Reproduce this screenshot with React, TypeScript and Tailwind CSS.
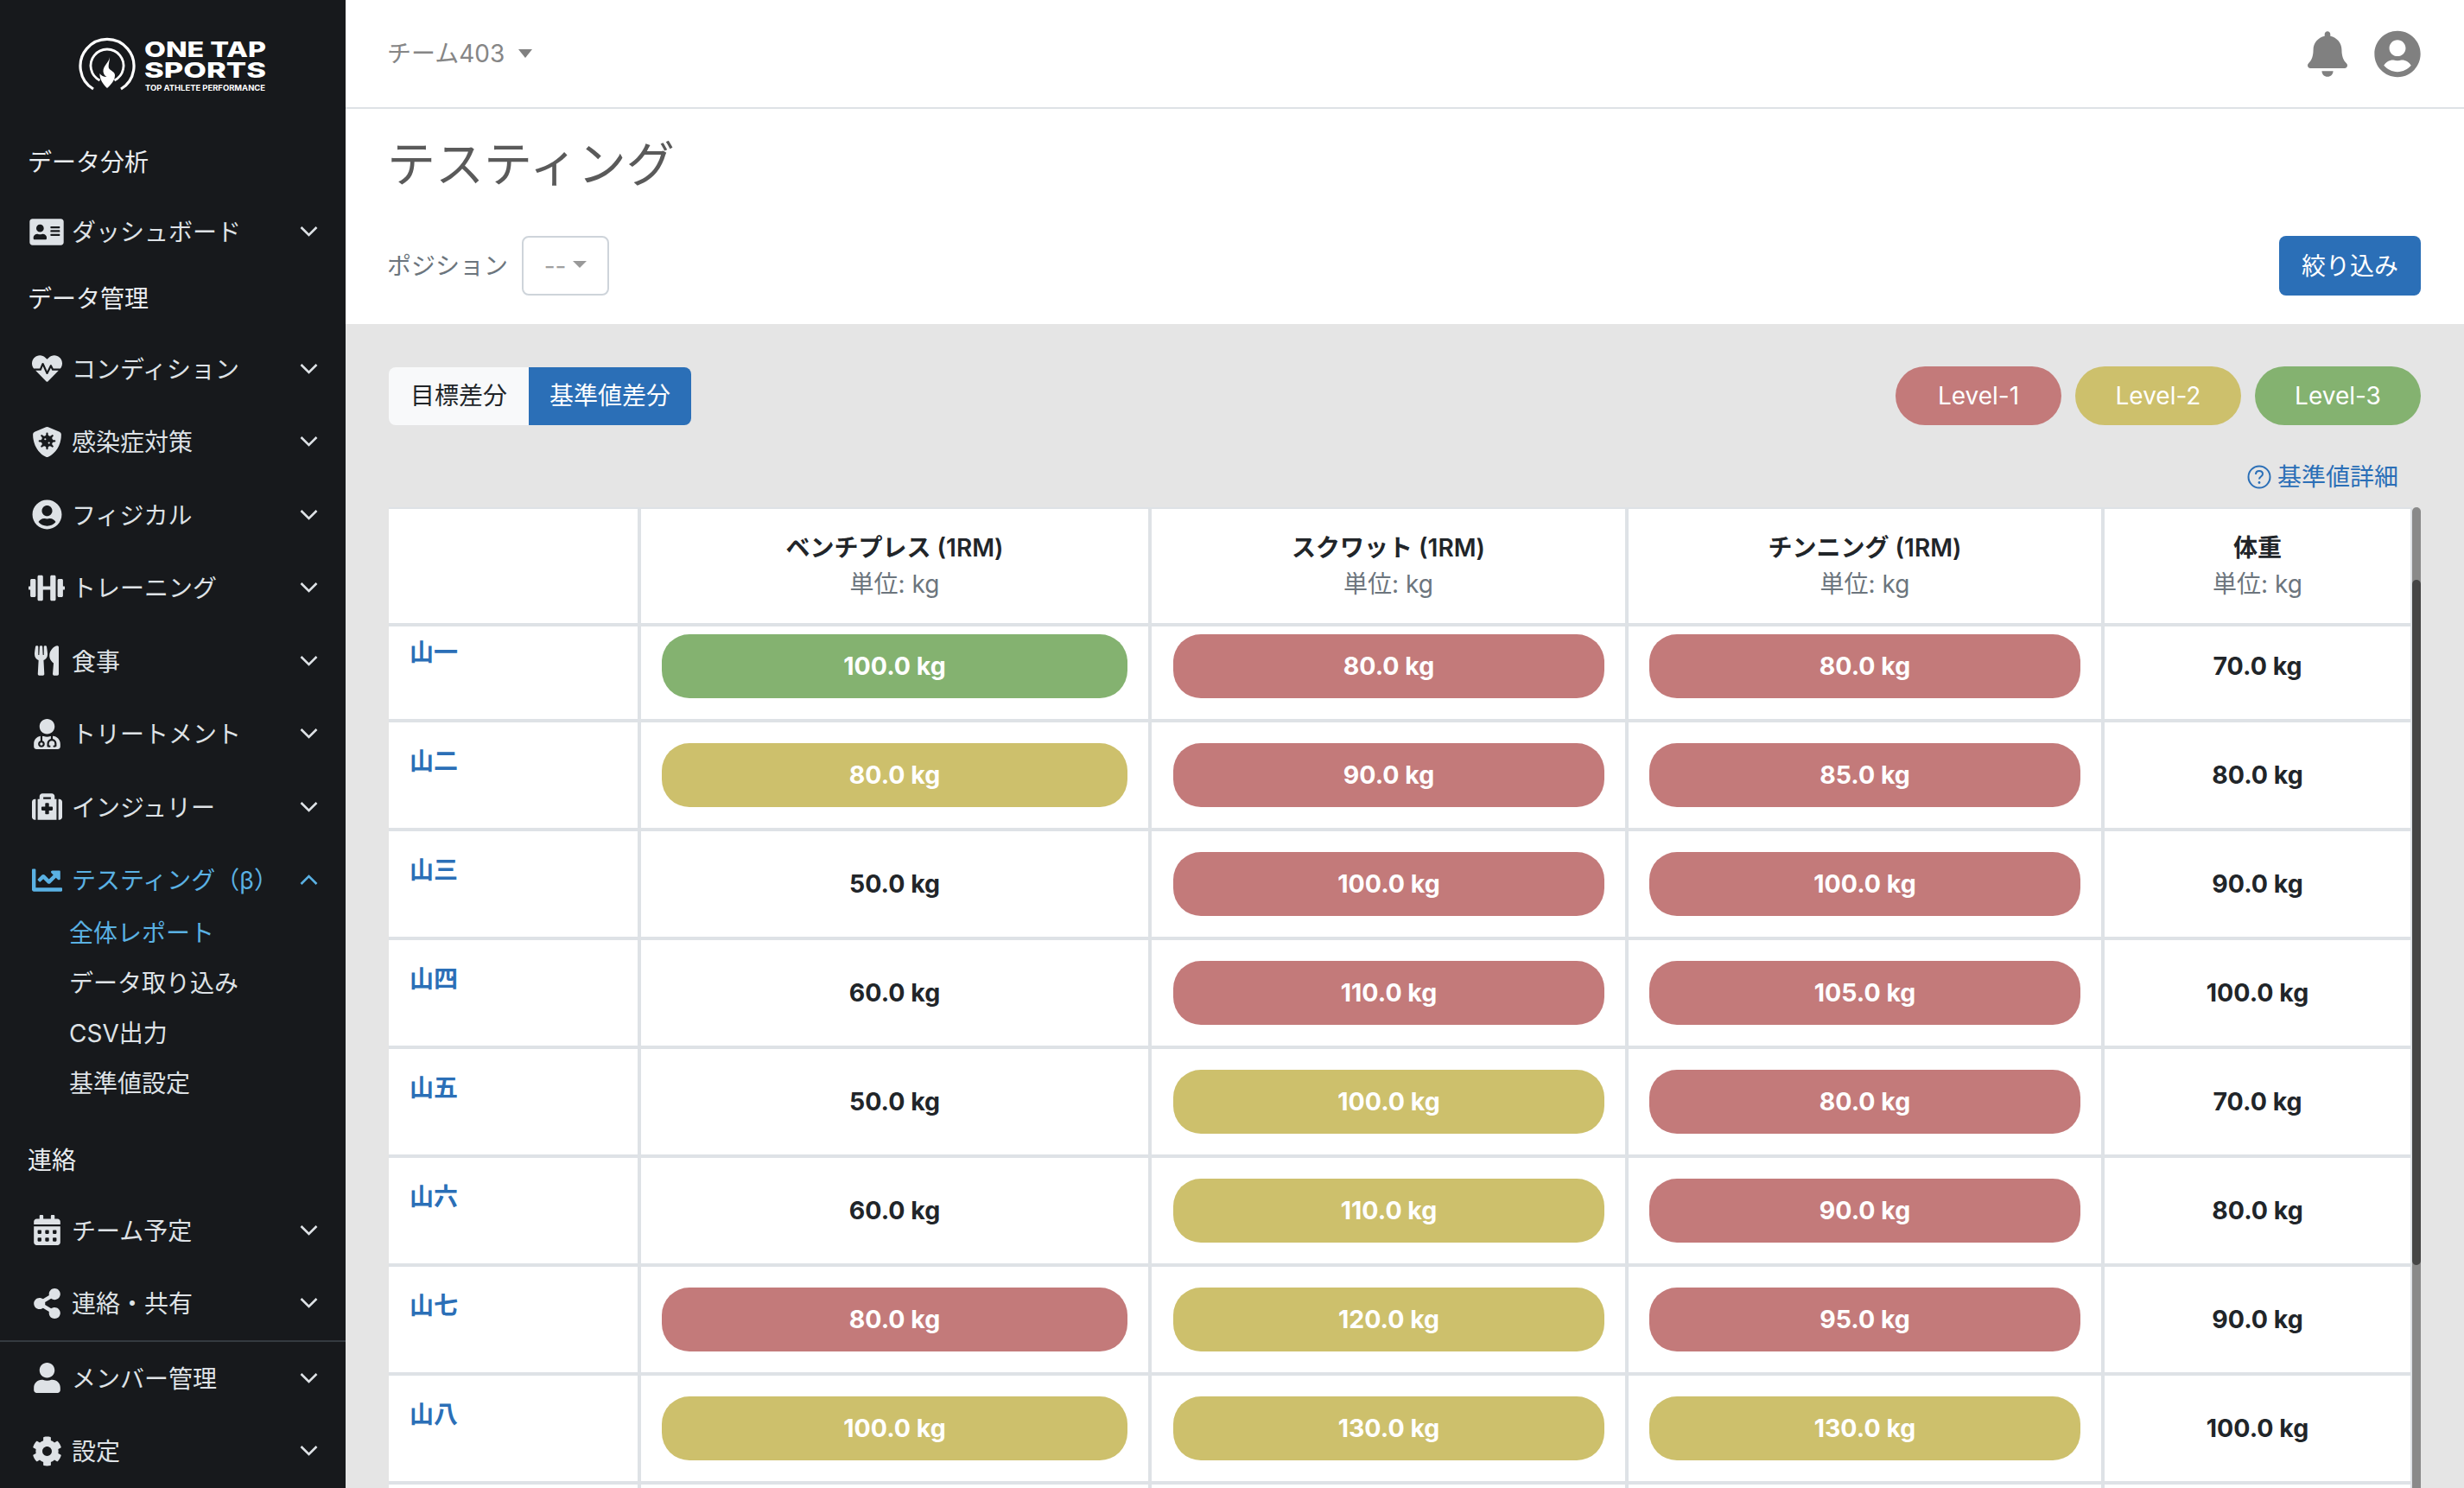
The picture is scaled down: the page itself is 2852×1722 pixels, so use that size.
import React from "react";
import {
  FaAddressCard, FaHeartbeat, FaShieldVirus, FaUserCircle, FaDumbbell, FaUtensils, FaUserMd,
  FaMedkit, FaChartLine, FaCalendarAlt, FaShareAlt, FaUser, FaCog, FaBell,
} from "react-icons/fa";

function Chevron({ up }: { up?: boolean }) {
  return (
    <svg viewBox="0 0 22 14" className="w-[23px] h-[14px] shrink-0">
      <path d={up ? "M2 12 L11 3 L20 12" : "M2 2 L11 11 L20 2"} fill="none" stroke="currentColor" strokeWidth="2.6" />
    </svg>
  );
}

function Logo() {
  const f = "Inter, sans-serif";
  return (
    <svg viewBox="0 0 230 72" className="w-[230px] h-[72px]">
      <path d="M18 63 A31 31 0 1 1 50 63" fill="none" stroke="#fff" strokeWidth="3.2" />
      <path d="M25.5 53 A19 19 0 1 1 42.5 53" fill="none" stroke="#fff" strokeWidth="2.8" />
      <path d="M37 26 C36.5 32 29 36 29.5 43 C30 46 31.5 48 33.5 49 C30 49 27 47.5 25.5 45 C25 52 30 58 34 62 C38.5 58 43 53 43 47 C43 43 38 42 36 39 C35 35 37 31 37 26 Z" fill="#fff" />
      <text x="77" y="26" textLength="141" lengthAdjust="spacingAndGlyphs" fontFamily={f} fontWeight="800" fontSize="25" fill="#fff">ONE TAP</text>
      <text x="77" y="50" textLength="141" lengthAdjust="spacingAndGlyphs" fontFamily={f} fontWeight="800" fontSize="25" fill="#fff">SPORTS</text>
      <text x="78" y="64.5" textLength="139" lengthAdjust="spacingAndGlyphs" fontFamily={f} fontWeight="700" fontSize="9" fill="#fff">TOP ATHLETE PERFORMANCE</text>
    </svg>
  );
}

function NavItem({ icon, label, active, up }: { icon: React.ReactNode; label: string; active?: boolean; up?: boolean }) {
  return (
    <div className={`h-[84.5px] shrink-0 flex items-center pl-[33px] pr-[31px] text-[28px] ${active ? "text-[#5ab1e3]" : "text-[#dee2e6]"}`}>
      <span className="w-[42px] flex justify-center shrink-0">{icon}</span>
      <span className="ml-[8px] pt-[2px] flex-1 whitespace-nowrap">{label}</span>
      <Chevron up={up} />
    </div>
  );
}

function Heading({ label, className }: { label: string; className: string }) {
  return <div className={`pl-[32px] pt-[2px] flex items-center text-[28px] text-[#e9ecef] shrink-0 ${className}`}>{label}</div>;
}

function Sidebar() {
  return (
    <aside className="w-[400px] h-full shrink-0 bg-[#17191c] flex flex-col overflow-hidden">
      <div className="h-[148px] shrink-0 pl-[90px] pt-[40px]">
        <Logo />
      </div>
      <Heading label="データ分析" className="h-[78px]" />
      <NavItem icon={<FaAddressCard className="w-[40px] h-[35px]" />} label="ダッシュボード" />
      <Heading label="データ管理" className="h-[68px]" />
      <div className="h-[6px] shrink-0" />
      <NavItem icon={<FaHeartbeat className="w-[35px] h-[35px]" />} label="コンディション" />
      <NavItem icon={<FaShieldVirus className="w-[35px] h-[35px]" />} label="感染症対策" />
      <NavItem icon={<FaUserCircle className="w-[35px] h-[35px]" />} label="フィジカル" />
      <NavItem icon={<FaDumbbell className="w-[44px] h-[35px]" />} label="トレーニング" />
      <NavItem icon={<FaUtensils className="w-[28px] h-[35px]" />} label="食事" />
      <NavItem icon={<FaUserMd className="w-[31px] h-[35px]" />} label="トリートメント" />
      <NavItem icon={<FaMedkit className="w-[35px] h-[35px]" />} label="インジュリー" />
      <NavItem icon={<FaChartLine className="w-[35px] h-[35px]" />} label="テスティング（β）" active up />
      <div className="mt-[1px] flex flex-col gap-[22px] pl-[80px] text-[28px] text-[#dee2e6] shrink-0">
        <div className="h-[36px] leading-[36px] text-[#5ab1e3]">全体レポート</div>
        <div className="h-[36px] leading-[36px]">データ取り込み</div>
        <div className="h-[36px] leading-[36px]">CSV出力</div>
        <div className="h-[36px] leading-[36px]">基準値設定</div>
      </div>
      <Heading label="連絡" className="h-[66px] mt-[37px]" />
      <div className="h-[7px] shrink-0" />
      <NavItem icon={<FaCalendarAlt className="w-[31px] h-[35px]" />} label="チーム予定" />
      <NavItem icon={<FaShareAlt className="w-[31px] h-[35px]" />} label="連絡・共有" />
      <div className="border-t-2 border-[#343a40] shrink-0" />
      <NavItem icon={<FaUser className="w-[31px] h-[35px]" />} label="メンバー管理" />
      <NavItem icon={<FaCog className="w-[35px] h-[35px]" />} label="設定" />
    </aside>
  );
}

type Cell = { v: string; c?: "r" | "y" | "g" };
const rows: { name: string; cells: Cell[] }[] = [
  { name: "山一", cells: [{ v: "100.0 kg", c: "g" }, { v: "80.0 kg", c: "r" }, { v: "80.0 kg", c: "r" }, { v: "70.0 kg" }] },
  { name: "山二", cells: [{ v: "80.0 kg", c: "y" }, { v: "90.0 kg", c: "r" }, { v: "85.0 kg", c: "r" }, { v: "80.0 kg" }] },
  { name: "山三", cells: [{ v: "50.0 kg" }, { v: "100.0 kg", c: "r" }, { v: "100.0 kg", c: "r" }, { v: "90.0 kg" }] },
  { name: "山四", cells: [{ v: "60.0 kg" }, { v: "110.0 kg", c: "r" }, { v: "105.0 kg", c: "r" }, { v: "100.0 kg" }] },
  { name: "山五", cells: [{ v: "50.0 kg" }, { v: "100.0 kg", c: "y" }, { v: "80.0 kg", c: "r" }, { v: "70.0 kg" }] },
  { name: "山六", cells: [{ v: "60.0 kg" }, { v: "110.0 kg", c: "y" }, { v: "90.0 kg", c: "r" }, { v: "80.0 kg" }] },
  { name: "山七", cells: [{ v: "80.0 kg", c: "r" }, { v: "120.0 kg", c: "y" }, { v: "95.0 kg", c: "r" }, { v: "90.0 kg" }] },
  { name: "山八", cells: [{ v: "100.0 kg", c: "y" }, { v: "130.0 kg", c: "y" }, { v: "130.0 kg", c: "y" }, { v: "100.0 kg" }] },
  { name: "", cells: [{ v: "" }, { v: "" }, { v: "" }, { v: "" }] },
];

const widths = ["w-[292px]", "w-[591px]", "w-[552px]", "w-[551px]", "flex-1"];
const pillBg: Record<string, string> = { r: "bg-[#c37a7a]", y: "bg-[#cdc06c]", g: "bg-[#84b270]" };

function HeaderCell({ i, title }: { i: number; title?: string }) {
  return (
    <div className={`${widths[i]} shrink-0 ${i < 4 ? "border-r-4" : ""} border-[#dee2e6] pt-[24px] text-center text-[28px] leading-[42px]`}>
      {title && <div className="font-semibold text-[#212529]">{title}</div>}
      {title && <div className="text-[#6c757d]">単位: kg</div>}
    </div>
  );
}

function Table() {
  return (
    <div className="flex flex-1 min-h-0 overflow-hidden">
      <div className="flex-1 bg-white border-t-2 border-r-2 border-[#dee2e6] flex flex-col">
        <div className="flex h-[136px] shrink-0 border-b-4 border-[#dee2e6]">
          <HeaderCell i={0} />
          <HeaderCell i={1} title="ベンチプレス (1RM)" />
          <HeaderCell i={2} title="スクワット (1RM)" />
          <HeaderCell i={3} title="チンニング (1RM)" />
          <HeaderCell i={4} title="体重" />
        </div>
        {rows.map((r, ri) => (
          <div key={ri} className="flex shrink-0 border-b-4 border-[#dee2e6]">
            <div className={`${widths[0]} shrink-0 border-r-4 border-[#dee2e6] pl-[24px] pb-[24px] ${ri === 0 ? "pt-[9px]" : "pt-[24px]"}`}>
              <div className="h-[42px] leading-[42px] text-[28px] font-semibold text-[#2b6fb7]">{r.name}</div>
            </div>
            {r.cells.map((c, ci) => (
              <div key={ci} className={`${widths[ci + 1]} shrink-0 ${ci < 3 ? "border-r-4" : ""} border-[#dee2e6] ${ci === 1 ? "pl-[25px] pr-[24px]" : "px-[24px]"} pb-[24px] ${ri === 0 ? "pt-[9px]" : "pt-[24px]"}`}>
                <div className={`h-[74px] rounded-[32px] flex items-center justify-center text-[28.5px] font-bold ${c.c ? `${pillBg[c.c]} text-white` : "text-[#212529]"}`}>
                  {c.v}
                </div>
              </div>
            ))}
          </div>
        ))}
      </div>
      <div className="w-[10px] shrink-0 bg-[#8a8a8a] rounded-t-[5px] flex flex-col">
        <div className="h-[84px] shrink-0" />
        <div className="h-[793px] shrink-0 bg-[#454545] rounded-[5px]" />
      </div>
    </div>
  );
}

export default function App() {
  return (
    <div lang="ja" className="w-[2852px] h-[1722px] flex overflow-hidden font-[Inter,'Noto_Sans_CJK_JP',sans-serif]">
      <Sidebar />
      <main className="flex-1 h-full flex flex-col bg-[#e5e5e5] min-w-0">
        <header className="h-[126px] shrink-0 bg-white border-b-2 border-[#dee2e6] pl-[48px] pr-[50px] flex items-center justify-between">
          <div className="flex items-center text-[28px] text-[#868686]">
            <span>チーム403</span>
            <span className="ml-[16px] w-0 h-0 border-x-[8.5px] border-x-transparent border-t-[10px] border-t-[#808080]" />
          </div>
          <div className="flex items-center gap-[31px] text-[#808080]">
            <FaBell className="w-[46px] h-[53px]" />
            <FaUserCircle className="w-[54px] h-[55px]" />
          </div>
        </header>
        <section className="h-[249px] shrink-0 bg-white pl-[48px] pr-[50px] pt-[26px]">
          <h1 className="h-[76px] leading-[76px] text-[56px] font-normal text-[#5a5a5a]">テスティング</h1>
          <div className="mt-[45px] flex items-center justify-between">
            <div className="flex items-center">
              <span className="text-[28px] text-[#6c757d]">ポジション</span>
              <div className="ml-[16px] w-[101px] h-[69px] border-2 border-[#ced4da] rounded-[8px] flex items-center justify-center text-[28px] text-[#a0a0a0] bg-white">
                <span className="mr-[8px]">--</span>
                <span className="w-0 h-0 -mt-[4px] border-x-[8px] border-x-transparent border-t-[8px] border-t-[#999999]" />
              </div>
            </div>
            <button className="w-[164px] h-[69px] rounded-[8px] bg-[#2b6fb7] text-white text-[28px]">絞り込み</button>
          </div>
        </section>
        <section className="flex-1 min-h-0 px-[50px] pt-[49px] flex flex-col">
          <div className="flex items-center justify-between h-[68px] shrink-0">
            <div className="flex h-[67px] text-[28px] rounded-[8px] overflow-hidden">
              <div className="w-[162px] bg-[#f8f9fa] text-[#212529] flex items-center justify-center">目標差分</div>
              <div className="w-[188px] bg-[#2b6fb7] text-white flex items-center justify-center">基準値差分</div>
            </div>
            <div className="flex gap-[16px] text-[28px] text-white">
              <div className="w-[192px] h-[68px] rounded-full bg-[#c37a7a] flex items-center justify-center">Level-1</div>
              <div className="w-[192px] h-[68px] rounded-full bg-[#cdc06c] flex items-center justify-center">Level-2</div>
              <div className="w-[192px] h-[68px] rounded-full bg-[#84b270] flex items-center justify-center">Level-3</div>
            </div>
          </div>
          <div className="mt-[39px] h-[42px] shrink-0 flex items-center justify-end pr-[26px] text-[28px] text-[#2b6fb7]">
            <svg viewBox="0 0 28 28" className="w-[28px] h-[28px] mr-[7px]">
              <circle cx="14" cy="14" r="12.5" fill="none" stroke="currentColor" strokeWidth="2" />
              <path d="M10 11 C10 8 12 7 14 7 C16.5 7 18 8.6 18 10.5 C18 13.5 14 13.5 14 16.5" fill="none" stroke="currentColor" strokeWidth="2" />
              <circle cx="14" cy="20.5" r="1.4" fill="currentColor" />
            </svg>
            <span>基準値詳細</span>
          </div>
          <div className="h-[14px] shrink-0" />
          <Table />
        </section>
      </main>
    </div>
  );
}
